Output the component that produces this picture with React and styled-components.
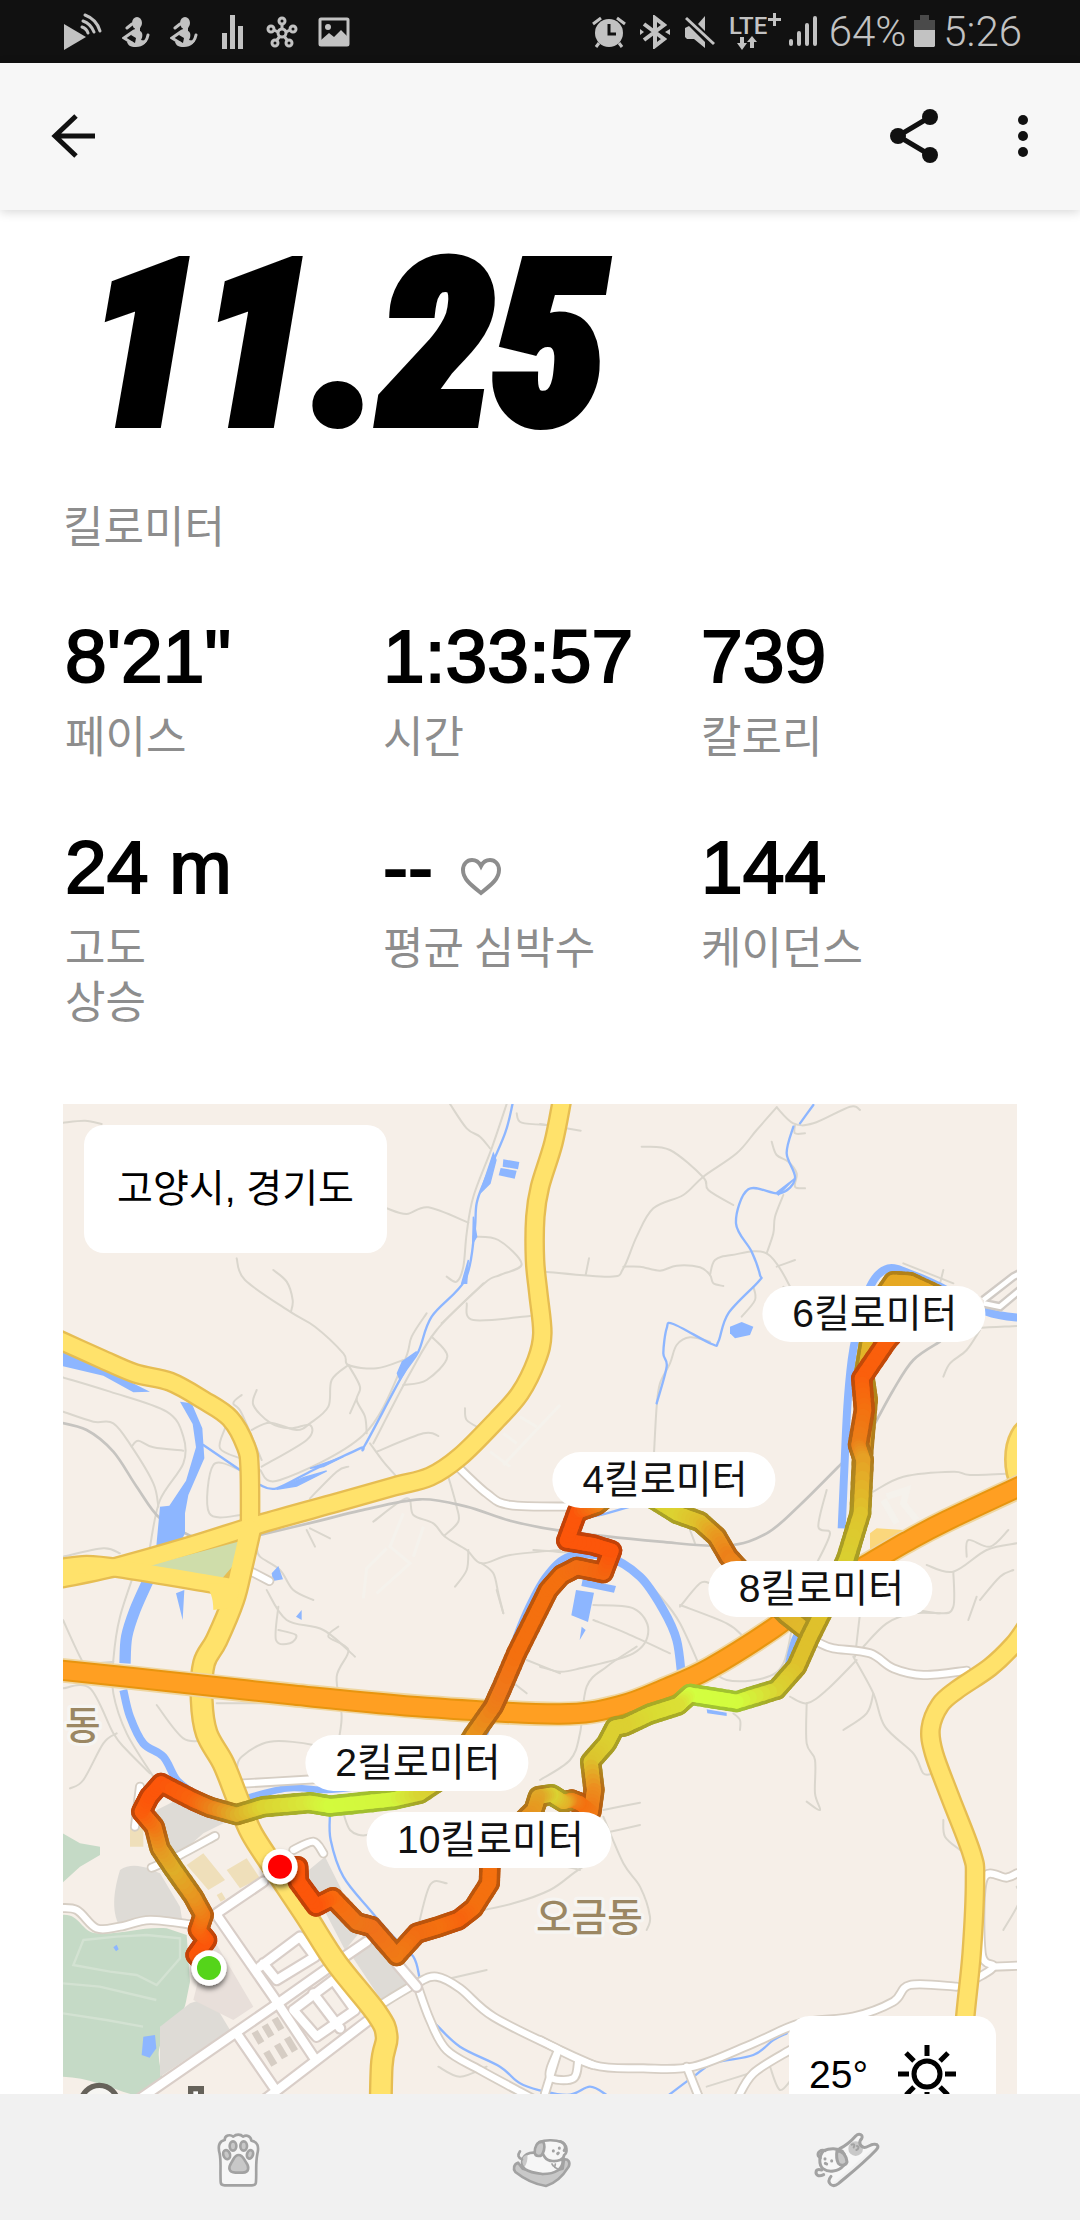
import React from 'react'
import styled, { createGlobalStyle } from 'styled-components'

const GlobalStyle = createGlobalStyle`
    * {
        box-sizing: border-box;
    }
    body {
        margin: 0;
        background: #fff;
        font-family: "Liberation Sans", "Noto Sans CJK KR", sans-serif;
    }
    button {
        border: 0;
        padding: 0;
        background: none;
        line-height: 0;
        cursor: pointer;
    }
`

const Screen = styled.div`
    display: flex;
    flex-direction: column;
    height: 100vh;
    overflow: hidden;
`

const StatusBar = styled.div`
    flex: none;
    display: flex;
    justify-content: space-between;
    align-items: center;
    height: 63px;
    padding: 0 58px 0 64px;
    background: #111;
    color: #c2c2c2;
`

const StatusGroup = styled.div`
    display: flex;
    align-items: center;
    gap: ${(props) => props.$gap}px;
`

const StatusText = styled.span`
    font-family: Roboto, sans-serif;
    font-size: 42px;
    font-weight: 300;
    line-height: 48px;
`

const AppBar = styled.header`
    position: relative;
    flex: none;
    display: flex;
    align-items: center;
    justify-content: space-between;
    height: 147px;
    padding: 0 45px 0 50px;
    background: #f7f7f7;
    box-shadow: 0 2px 10px rgba(0, 0, 0, 0.16);
`

const Actions = styled.div`
    display: flex;
    align-items: center;
    gap: 72px;
`

const Content = styled.main`
    flex: 1;
    min-height: 0;
    overflow: hidden;
    padding: 0 63px;
`

const Distance = styled.h1`
    margin: 0;
    padding: 12px 0 0 24px;
    color: #000;
    font-family: "Roboto Condensed", "Open Sans Condensed", "Noto Sans Condensed", "Open Sans", sans-serif;
    font-size: 228px;
    font-style: italic;
    font-weight: 900;
    line-height: 246px;
    -webkit-text-stroke: 10px #000;
`

const Label = styled.div`
    margin-top: 4px;
    color: #8d8d8d;
    font-family: "Noto Sans CJK KR", sans-serif;
    font-size: 44px;
    line-height: 54px;
`

const DistanceLabel = styled(Label)`
    margin-top: 29px;
`

const Stats = styled.section`
    display: grid;
    grid-template-columns: repeat(3, 1fr);
    row-gap: 59px;
    margin-top: 58px;
`

const Stat = styled.div`
    padding-left: 2px;
`

const Value = styled.div`
    display: flex;
    align-items: center;
    gap: 28px;
    height: 94px;
    color: #000;
    font-size: 75px;
    line-height: 94px;
    white-space: nowrap;
    -webkit-text-stroke: 2px #000;

    svg {
        margin-top: 20px;
    }
`

const MapBox = styled.section`
    position: relative;
    margin-top: 78px;
    background: #f6efe8;
`

const MapSvg = styled.svg`
    display: block;
    width: 100%;
    height: auto;
`

const Place = styled.div`
    position: absolute;
    top: 21px;
    left: 21px;
    padding: 0 33px;
    border-radius: 20px;
    background: #fff;
    color: #000;
    font-size: 39px;
    line-height: 128px;
`

const Weather = styled.div`
    position: absolute;
    right: 21px;
    bottom: 21px;
    display: flex;
    align-items: center;
    gap: 30px;
    height: 116px;
    padding: 0 40px 0 20px;
    border-radius: 20px;
    background: #fff;
    color: #000;
    font-size: 39px;
    line-height: 1;
`

const Pin = styled.div`
    position: absolute;
    left: ${(props) => props.$x}%;
    top: ${(props) => props.$y}%;
    transform: translate(-50%, -50%);
    padding: 0 28px 0 30px;
    border-radius: 28px;
    background: #fff;
    color: #111;
    font-size: 39px;
    line-height: 56px;
    white-space: nowrap;
`

const BottomNav = styled.nav`
    flex: none;
    display: flex;
    justify-content: space-around;
    align-items: center;
    height: 126px;
    padding: 0 80px 0 88px;
    background: #f1f1f1;
`

/* ---------- status icons ---------- */

const Runner = () => (
    <svg width="28" height="32" viewBox="0 0 28 32" fill="#c2c2c2" stroke="#c2c2c2">
        <ellipse cx="15" cy="7" rx="5" ry="6" stroke="none" />
        <path d="M12 10h6v5c3 1 3 6 1 9l5 1c2-2 1-4 2-6-0 8-5 12-12 12-6 0-8-2-9-5l4-1 4 2 1-5-5-3c1-3 2-5 4-6z" stroke="none" />
        <path d="M10 8L5 12M12 15L2 22l8 5M19 27c4 0 6-3 7-8" fill="none" strokeWidth="3" strokeLinecap="round" />
    </svg>
)

const LeftIcons = () => (
    <StatusGroup $gap={20}>
        <svg width="38" height="38" viewBox="0 0 38 38">
            <path d="M0 11l22 13L0 37z" fill="#c2c2c2" />
            <path d="M18 14c3 1 5 3 6 6M19 8c6 2 9 6 11 11M21 2c8 3 13 9 15 16" fill="none" stroke="#c2c2c2" strokeWidth="3" strokeLinecap="round" />
        </svg>
        <Runner />
        <Runner />
        <svg width="28" height="36" viewBox="0 0 28 36" fill="#c2c2c2">
            <path d="M4 19h5v16H4zM12 1h5v34h-5zM20 12h5v23h-5z" />
        </svg>
        <svg width="32" height="32" viewBox="0 0 32 32" fill="none" stroke="#c2c2c2" strokeWidth="3">
            <circle cx="16" cy="17" r="4" />
            <circle cx="16" cy="5" r="3" />
            <circle cx="5" cy="13" r="3" />
            <circle cx="27" cy="13" r="3" />
            <circle cx="9" cy="27" r="3" />
            <circle cx="23" cy="27" r="3" />
            <path d="M16 8v5M8 14l4 2M24 14l-4 2M11 24l3-4M21 24l-3-4" />
        </svg>
        <svg width="32" height="30" viewBox="0 0 32 30">
            <rect x="2" y="2" width="28" height="26" rx="1" fill="none" stroke="#c2c2c2" strokeWidth="3" />
            <circle cx="10" cy="10" r="3" fill="#c2c2c2" />
            <path d="M3 23l8-7 5 4 7-7 6 6v9H3z" fill="#c2c2c2" />
        </svg>
    </StatusGroup>
)

const RightIcons = () => (
    <StatusGroup $gap={12}>
        <StatusGroup $gap={14}>
            <svg width="34" height="32" viewBox="0 0 34 32">
                <circle cx="17" cy="17" r="14" fill="#c2c2c2" />
                <path d="M1 8l8-6M33 8l-8-6M7 27l-3 4M27 27l3 4" stroke="#c2c2c2" strokeWidth="3" />
                <path d="M17 8v10h7" fill="none" stroke="#111" strokeWidth="3" />
            </svg>
            <svg width="30" height="34" viewBox="0 0 30 34" fill="none" stroke="#c2c2c2" strokeWidth="4">
                <path d="M4 9l20 15-9 7V3l9 7L4 25" />
                <path d="M0 14l4 3-4 3zM30 14l-5 3 5 3z" fill="#c2c2c2" stroke="none" />
            </svg>
            <svg width="31" height="34" viewBox="0 0 31 34">
                <path d="M1 13l4-2 16 16v6l-11-9H3l-2-2zM14 9l7-8v15z" fill="#c2c2c2" />
                <path d="M2 3l28 26" stroke="#c2c2c2" strokeWidth="3" />
            </svg>
            <StatusGroup $gap={8}>
                <svg width="52" height="40" viewBox="0 0 52 40" fill="#c2c2c2">
                    <text x="0" y="22" fontFamily="Roboto, sans-serif" fontSize="24" fontWeight="500">LTE</text>
                    <path d="M44 1h3v5h5v3h-5v5h-3V9h-5V6h5z" />
                    <path d="M11 25h4v6h3l-5 7-5-7h3zM21 36h4v-6h3l-5-6-5 6h3z" />
                </svg>
                <svg width="28" height="32" viewBox="0 0 28 32" stroke="#c2c2c2" strokeWidth="4" strokeLinecap="round">
                    <path d="M2 25v3M10 17v11M18 9v19M26 2v26" />
                </svg>
            </StatusGroup>
        </StatusGroup>
        <StatusGroup $gap={8}>
            <StatusText>64%</StatusText>
            <svg width="21" height="33" viewBox="0 0 21 33">
                <path d="M6 0h9v5h6v10H0V5h6z" fill="#4a4a4a" />
                <path d="M0 15h21v16l-1 1H1l-1-1z" fill="#c2c2c2" />
            </svg>
            <StatusText>5:26</StatusText>
        </StatusGroup>
    </StatusGroup>
)

/* ---------- map ---------- */

const VIEW = { x: 9, y: 12, w: 2862, h: 3147 }

// Catmull-Rom through the points
const smooth = (pts) => {
    let d = `M${pts[0][0]} ${pts[0][1]}`
    for (let i = 0; i < pts.length - 1; i++) {
        const p0 = pts[i - 1] || pts[i]
        const p1 = pts[i]
        const p2 = pts[i + 1]
        const p3 = pts[i + 2] || p2
        const c1 = [p1[0] + (p2[0] - p0[0]) / 6, p1[1] + (p2[1] - p0[1]) / 6]
        const c2 = [p2[0] - (p3[0] - p1[0]) / 6, p2[1] - (p3[1] - p1[1]) / 6]
        d += `C${c1[0]} ${c1[1]} ${c2[0]} ${c2[1]} ${p2[0]} ${p2[1]}`
    }
    return d
}

const yellowRoads = [
    [[-20, 712], [120, 775], [225, 820], [330, 845], [430, 900], [510, 955], [558, 1040], [569, 1110], [570, 1300]],
    [[1506, 0], [1480, 130], [1440, 260], [1426, 350], [1425, 480], [1435, 580], [1447, 700], [1430, 780], [1380, 880], [1310, 960], [1200, 1070], [1110, 1130], [1000, 1160], [830, 1208], [600, 1272], [400, 1335], [170, 1400], [-20, 1440]],
    [[-20, 1408], [80, 1395], [200, 1408], [440, 1448], [520, 1462]],
    [[2900, 1580], [2860, 1635], [2790, 1702], [2690, 1770], [2640, 1815], [2612, 1885], [2622, 1960], [2670, 2090], [2735, 2260], [2745, 2340], [2735, 2560], [2715, 2760], [2710, 2900]],
]

const mainRoad = [[570, 1290], [545, 1400], [520, 1500], [470, 1620], [432, 1690], [425, 1800], [440, 1900], [490, 1990], [530, 2090], [575, 2200], [660, 2330], [740, 2450], [830, 2590], [950, 2740], [980, 2810], [965, 2900], [960, 3180]]

const highway = [[-20, 1708], [300, 1742], [700, 1785], [1100, 1822], [1500, 1842], [1680, 1817], [1820, 1764], [1950, 1704], [2140, 1585], [2280, 1480], [2420, 1395], [2540, 1325], [2660, 1262], [2900, 1150]]

const whiteRoads = [
    [[1190, 1097], [1280, 1180], [1350, 1215], [1540, 1220]],
    [[555, 1405], [628, 1443]],
    [[525, 2052], [760, 2038]],
    [[2280, 1630], [2320, 1645], [2430, 1660], [2500, 1705], [2590, 1725], [2720, 1712]],
    [[2870, 2320], [2840, 2333], [2770, 2338], [2765, 2560], [2800, 2600], [2740, 2640]],
    [[2800, 2600], [2880, 2597]],
    [[2690, 2660], [2550, 2655], [2500, 2705], [2380, 2750], [2220, 2770], [2080, 2830], [1900, 2900], [1750, 2905], [1600, 2895], [1440, 2820]],
    [[-10, 2425], [50, 2430], [110, 2485], [180, 2480], [270, 2460], [400, 2475]],
    [[275, 2303], [350, 2270], [465, 2208]],
    [[240, 2060], [225, 2180]],
    [[700, 2250], [760, 2225], [790, 2260]],
    [[960, 2715], [1070, 2650], [1130, 2630], [1200, 2665], [1300, 2750], [1500, 2850], [1600, 2895]],
    [[1070, 2650], [1110, 2760], [1160, 2850], [1260, 2910], [1380, 2975], [1500, 3040]],
    [[1495, 2850], [1455, 2980]],
    [[1880, 2900], [1920, 3000]],
    [[2190, 2850], [2080, 2920], [2030, 3000]],
    [[1490, 2860], [1470, 2930], [1540, 2935], [1555, 2880]],
]

const streets = [
    [[470, 2445], [640, 2690], [760, 2870]],
    [[220, 3010], [640, 2720], [810, 2600], [920, 2525]],
    [[470, 2440], [610, 2345]],
    [[600, 2600], [720, 2510], [765, 2570], [650, 2640], [610, 2590]],
    [[700, 2730], [820, 2640], [885, 2730], [770, 2810], [700, 2730]],
    [[760, 2680], [840, 2785]],
    [[530, 2800], [640, 2960]],
    [[600, 3010], [920, 2765]],
    [[1010, 2590], [1070, 2660]],
]

const greyRoads = [
    [[9, 68], [75, 62], [125, 72]],
    [[1170, 12], [1220, 85], [1260, 110], [1290, 145]],
    [[1340, 12], [1295, 145], [1240, 290], [1220, 400], [1210, 500], [1190, 545], [1160, 530]],
    [[1370, 40], [1385, 68], [1470, 75]],
    [[980, 325], [1040, 342], [1105, 322], [1225, 368]],
    [[1240, 410], [1315, 420], [1385, 492], [1320, 525], [1275, 548], [1145, 670]],
    [[1220, 610], [1240, 660], [1410, 648]],
    [[1115, 710], [1162, 770], [1100, 840], [1030, 855]],
    [[1100, 640], [1055, 710], [1030, 790], [910, 1005], [660, 1140], [600, 1110]],
    [[1270, 550], [1130, 690], [1050, 820], [940, 1030]],
    [[530, 475], [555, 540], [690, 635], [765, 680], [850, 760], [865, 795], [950, 805], [1030, 780]],
    [[640, 510], [680, 545], [698, 600], [693, 635]],
    [[865, 795], [815, 840], [805, 920], [750, 970], [710, 990], [630, 968], [575, 990]],
    [[590, 870], [580, 915], [630, 968], [690, 985], [750, 975], [740, 1020], [605, 1100]],
    [[865, 795], [900, 860], [890, 900], [915, 950], [920, 1000]],
    [[890, 895], [870, 940]],
    [[9, 832], [150, 875], [320, 935], [370, 1010], [370, 1090], [300, 1200], [270, 1340]],
    [[9, 935], [100, 965], [160, 970], [215, 1040], [280, 1150], [295, 1220]],
    [[215, 1040], [235, 1022], [280, 1042], [370, 1052]],
    [[545, 885], [520, 910], [545, 940], [605, 1080]],
    [[495, 985], [480, 1045], [540, 1075]],
    [[540, 1110], [460, 1095], [448, 1240], [545, 1245]],
    [[1215, 925], [1220, 960], [1260, 985]],
    [[950, 1055], [1090, 1000], [1135, 1008]],
    [[930, 1030], [970, 1085], [1010, 1130]],
    [[750, 1195], [830, 1115], [865, 1100]],
    [[1165, 1130], [1190, 1220], [1195, 1265], [1155, 1305]],
    [[940, 1265], [1040, 1195], [1060, 1245], [1120, 1270], [1155, 1310], [1220, 1350], [1265, 1390], [1350, 1365], [1500, 1350]],
    [[1265, 1390], [1300, 1420], [1315, 1480], [1330, 1540]],
    [[1225, 1350], [1220, 1410], [1185, 1460]],
    [[740, 1290], [765, 1340]],
    [[750, 1285], [810, 1315]],
    [[590, 1340], [600, 1370], [660, 1410], [700, 1470], [760, 1500]],
    [[620, 1470], [680, 1560], [790, 1590], [885, 1670]],
    [[655, 1520], [648, 1620], [690, 1630], [708, 1605], [655, 1590]],
    [[835, 1580], [805, 1610], [865, 1650], [830, 1730], [845, 1850], [830, 1950]],
    [[9, 1370], [130, 1345], [180, 1360]],
    [[240, 1370], [180, 1550], [160, 1680], [160, 1780], [200, 1900], [280, 2030]],
    [[9, 1560], [60, 1670], [80, 1690], [160, 1685]],
    [[9, 1765], [90, 1765], [160, 1900], [200, 1950], [270, 2020]],
    [[30, 2065], [70, 2040], [130, 1930], [170, 1900]],
    [[290, 1815], [370, 1915], [440, 1920]],
    [[470, 1810], [840, 1810]],
    [[530, 2010], [545, 1970], [630, 1925], [760, 1935], [800, 1960]],
    [[1310, 1470], [1330, 1540]],
    [[1400, 1680], [1500, 1720]],
    [[1350, 1740], [1400, 1780]],
    [[845, 2120], [870, 2190], [920, 2205], [950, 2170], [1000, 2150]],
    [[1070, 2500], [1110, 2355], [1160, 2350]],
    [[1220, 2440], [1360, 2410], [1470, 2370], [1540, 2320], [1570, 2300]],
    [[820, 2390], [900, 2440], [1010, 2530], [1050, 2560]],
    [[1150, 2640], [1280, 2610]],
    [[1135, 2900], [1200, 2930], [1280, 2900]],
    [[2150, 22], [2090, 90], [2030, 160], [1930, 230], [1870, 285], [1780, 325], [1730, 410], [1690, 505], [1650, 530], [1455, 515]],
    [[1745, 140], [1830, 150], [1930, 232], [1945, 270], [2020, 315]],
    [[2150, 22], [2200, 70], [2260, 70], [2370, 20], [2400, 30]],
    [[1440, 72], [1562, 92]],
    [[1587, 475], [1577, 525]],
    [[1690, 500], [1740, 500], [1800, 512], [1850, 497], [1920, 502], [1950, 525], [1960, 550], [1990, 558]],
    [[1950, 525], [1965, 480], [2015, 465], [2120, 460], [2190, 560], [2170, 560]],
    [[2120, 460], [2140, 400], [2145, 350], [2170, 285]],
    [[2150, 500], [2205, 480]],
    [[2205, 75], [2205, 100], [2235, 100]],
    [[2135, 125], [2150, 165], [2185, 185], [2210, 220], [2205, 260], [2235, 265]],
    [[2080, 560], [2085, 600], [2045, 650]],
    [[1950, 725], [1890, 712], [1850, 735], [1830, 790], [1800, 850], [1790, 920], [1782, 1060]],
    [[2640, 720], [2700, 690], [2870, 678]],
    [[2760, 690], [2720, 750], [2670, 790], [2650, 830]],
    [[2530, 490], [2680, 550]],
    [[2650, 510], [2640, 550]],
    [[2440, 1175], [2530, 1130], [2680, 1115], [2730, 1125], [2870, 1120]],
    [[2300, 1170], [2275, 1280], [2310, 1300], [2270, 1390]],
    [[1600, 1560], [1700, 1600], [1830, 1660]],
    [[1890, 1290], [1905, 1330]],
    [[2600, 1395], [2680, 1415], [2780, 1350], [2870, 1330]],
    [[2720, 1370], [2725, 1320], [2790, 1340], [2845, 1290]],
    [[2680, 1415], [2680, 1520], [2640, 1540], [2520, 1520]],
    [[2760, 1500], [2820, 1430], [2860, 1410]],
    [[2725, 1560], [2750, 1490]],
    [[1420, 1350], [1490, 1355], [1600, 1365], [1720, 1410], [1810, 1500], [1860, 1570], [1920, 1700]],
    [[1860, 1520], [1920, 1450], [1950, 1450]],
    [[1600, 1515], [1720, 1525], [1765, 1590], [1720, 1660], [1560, 1705], [1500, 1715], [1440, 1700]],
    [[1730, 1640], [1640, 1700], [1580, 1760], [1560, 1900], [1530, 1980], [1440, 2040]],
    [[1860, 1515], [2000, 1570], [2050, 1610]],
    [[1930, 1690], [2000, 1740], [2110, 1735], [2170, 1690], [2200, 1560]],
    [[2390, 1680], [2300, 1770], [2240, 1810], [2190, 1790]],
    [[2240, 1810], [2240, 1930], [2265, 1980], [2265, 2080], [2280, 2130], [2240, 2105]],
    [[2380, 1670], [2440, 1780], [2475, 1880], [2560, 1960], [2590, 2020], [2620, 2020]],
    [[2440, 1780], [2420, 1840], [2350, 1890]],
    [[2410, 1640], [2480, 1570], [2560, 1540], [2640, 1540]],
    [[2385, 1670], [2400, 1540]],
    [[2020, 1840], [2040, 1860], [2040, 1890]],
    [[1630, 2130], [1740, 2108]],
    [[1630, 2200], [1740, 2175]],
    [[1630, 2150], [1690, 2290], [1740, 2360], [1770, 2450], [1760, 2490]],
    [[1520, 2300], [1560, 2310]],
    [[2650, 2160], [2655, 2210], [2700, 2250]],
    [[2870, 2360], [2880, 2400], [2830, 2490]],
    [[1940, 2960], [2100, 2910]],
    [[2130, 2900], [2160, 2970], [2200, 2930]],
]

const rails = [
    [[-10, 965], [80, 990], [160, 1055], [230, 1160], [300, 1255], [400, 1312]],
    [[600, 1305], [780, 1262], [900, 1232], [1080, 1198], [1220, 1220], [1350, 1262], [1500, 1292], [1800, 1325], [2000, 1337], [2120, 1300], [2220, 1215], [2360, 1075]],
    [[2440, 980], [2500, 870], [2560, 780], [2640, 725]],
]

const streams = [
    [[1358, 10], [1335, 100], [1275, 240], [1250, 310], [1243, 400], [1215, 540], [1115, 650], [1075, 755], [1025, 830], [915, 1035], [900, 1045], [760, 1110], [650, 1165], [600, 1155]],
    [[2200, 80], [2180, 160], [2205, 235], [2160, 280], [2065, 268], [2028, 370], [2075, 455], [2100, 525], [2095, 545], [2005, 640], [1975, 725], [1955, 732], [1840, 672], [1820, 685], [1810, 760], [1820, 800], [1790, 910]],
    [[2260, 15], [2220, 70]],
    [[430, 1035], [540, 1110]],
    [[810, 2140], [812, 2220], [850, 2330], [930, 2430], [1000, 2510], [1060, 2570], [1078, 2630]],
    [[1125, 2770], [1200, 2840], [1320, 2900], [1390, 2955], [1520, 2985], [1590, 2960], [1640, 2985]],
    [[1820, 2990], [1900, 2930], [1960, 2890], [2080, 2865], [2140, 2820], [2180, 2800]],
    [[1560, 1258], [1640, 1240], [1710, 1220]],
]

const rivers = [
    { w: 24, pts: [[2345, 1285], [2352, 1130], [2362, 920], [2375, 780], [2390, 700], [2430, 560], [2485, 505], [2560, 525], [2640, 560], [2780, 635], [2890, 655]] },
    { w: 34, pts: [[265, 1440], [225, 1530], [200, 1610], [195, 1690]] },
    { w: 26, pts: [[1240, 1990], [1290, 1850], [1350, 1670], [1400, 1540], [1460, 1430], [1530, 1370], [1640, 1370], [1740, 1430], [1810, 1530], [1850, 1620], [1865, 1730]] },
    { w: 24, pts: [[190, 1770], [210, 1850], [250, 1930], [310, 1970], [350, 2040], [400, 2080]] },
    { w: 20, pts: [[540, 2100], [680, 2065], [800, 2070], [900, 2060]] },
    { w: 24, pts: [[2260, 1560], [2210, 1610], [2185, 1700]] },
]

const START = '#fc560a'

// x, y, colour at that point of the run
const outbound = [
    [445, 2605, START], [408, 2565, START], [440, 2520, START], [415, 2490, '#f8640e'], [430, 2445, '#f07a15'], [400, 2390, '#e89420'], [340, 2305, '#dfae28'], [300, 2245, '#e59a22'], [283, 2180, '#f07a15'], [245, 2135, '#fa5f0c'], [268, 2090, START], [303, 2050, START], [400, 2100, '#f8640e'], [450, 2122, '#ec8019'], [530, 2144, '#dfb02a'], [610, 2120, '#dcd431'], [750, 2108, '#d8ea3a'], [810, 2118, '#d3fb3d'], [1000, 2098, '#d3f53c'], [1080, 2080, '#d8d533'], [1170, 2020, '#dfc02c'], [1240, 1905, '#e8961e'], [1300, 1820, '#ee7f18'], [1325, 1765, '#f0781a'], [1370, 1660, '#f4700f'], [1430, 1540, '#f4700f'], [1465, 1470, '#f4700f'], [1505, 1425, '#f4700f'], [1550, 1402, '#f26d12'], [1630, 1418, '#f4660f'], [1655, 1352, START], [1600, 1335, START], [1520, 1322, START], [1552, 1235, START], [1610, 1215, '#f07a15'], [1640, 1190, '#dfa82a'], [1700, 1150, '#dcc42d'], [1770, 1190, '#d9d22f'], [1850, 1240, '#dcd231'], [1920, 1265, '#dfbe2b'], [1970, 1310, '#e89a20'], [2005, 1370, '#ed8019'], [2060, 1430, '#ea9020'], [2180, 1545, '#e0b42a'], [2250, 1600, '#e0bc2c'], [2300, 1500, '#e0c02c'], [2362, 1375, '#d9cf30'], [2400, 1240, '#dfc02c'], [2408, 1060, '#e6a125'], [2422, 900, '#e6a822'], [2412, 830, '#e2b428'], [2430, 720, '#e2b428'], [2455, 610, '#e6a822'], [2500, 545, '#e6a822'], [2550, 548, '#e6a822'], [2640, 590, '#e6a822'],
]

const inbound = [
    [2560, 630, START], [2480, 725, '#fa5f0c'], [2405, 835, '#fa5f0c'], [2413, 930, '#f4700f'], [2395, 1035, '#ec8019'], [2410, 1080, '#e6a125'], [2402, 1240, '#dfc42d'], [2360, 1375, '#dacf30'], [2300, 1510, '#dfc42c'], [2250, 1610, '#dfc02c'], [2210, 1700, '#dfc22c'], [2150, 1768, '#dad232'], [2030, 1805, '#d3fb3d'], [1890, 1783, '#d3ff40'], [1855, 1815, '#dbe035'], [1770, 1842, '#dadc32'], [1695, 1877, '#dcd031'], [1665, 1882, '#dcd031'], [1640, 1930, '#dcd031'], [1592, 1985, '#dcc42d'], [1602, 2070, '#ec9020'], [1593, 2135, '#f07a15'], [1560, 2110, '#f4700f'], [1535, 2100, '#ee8019'], [1510, 2106, '#e4b028'], [1475, 2084, '#dad232'], [1435, 2090, '#e0a828'], [1422, 2130, '#e69a20'], [1370, 2180, '#e58a20'], [1290, 2290, '#f4700f'], [1288, 2350, '#f4700f'], [1240, 2425, '#f4700f'], [1195, 2460, '#f8640e'], [1130, 2482, '#f4700f'], [1070, 2500, '#f26d12'], [1010, 2567, '#f07a15'], [935, 2480, '#f0701a'], [890, 2468, '#ee7518'], [818, 2393, '#f96a0e'], [768, 2418, START], [715, 2345, START], [713, 2300, START], [660, 2300, START],
]

const toRgb = (hex) => [1, 3, 5].map((i) => parseInt(hex.slice(i, i + 2), 16))
const mix = (a, b, t, shade) =>
    `rgb(${toRgb(a).map((v, i) => Math.round((v + (toRgb(b)[i] - v) * t) * shade)).join(',')})`

const STEPS = 6

const pieces = (pts) =>
    pts.slice(1).flatMap((b, i) => {
        const a = pts[i]
        return Array.from({ length: STEPS }, (_, n) => {
            const t1 = n / STEPS
            const t2 = (n + 1) / STEPS
            return {
                x1: a[0] + (b[0] - a[0]) * t1,
                y1: a[1] + (b[1] - a[1]) * t1,
                x2: a[0] + (b[0] - a[0]) * t2,
                y2: a[1] + (b[1] - a[1]) * t2,
                edge: mix(a[2], b[2], t1, 0.77),
                fill: mix(a[2], b[2], t1, 1),
            }
        })
    })

const Route = ({ pts }) => (
    <g strokeLinecap="round">
        {pieces(pts).map((p, i) => (
            <line key={'e' + i} x1={p.x1} y1={p.y1} x2={p.x2} y2={p.y2} stroke={p.edge} strokeWidth="64" />
        ))}
        {pieces(pts).map((p, i) => (
            <line key={'f' + i} x1={p.x1} y1={p.y1} x2={p.x2} y2={p.y2} stroke={p.fill} strokeWidth="42" />
        ))}
    </g>
)

const Lines = ({ list, color, width, curved }) => (
    <g fill="none" stroke={color} strokeWidth={width} strokeLinejoin="round" strokeLinecap="round">
        {list.map((pts, i) => (
            <path key={i} d={curved ? smooth(pts) : 'M' + pts.map((p) => p.join(' ')).join('L')} />
        ))}
    </g>
)

const RouteMap = () => (
    <MapSvg viewBox={`${VIEW.x} ${VIEW.y} ${VIEW.w} ${VIEW.h}`} role="img" aria-label="고양시, 경기도">
        <defs>
            <filter id="drop" x="-50%" y="-50%" width="200%" height="200%">
                <feDropShadow dx="0" dy="10" stdDeviation="8" floodOpacity="0.55" />
            </filter>
        </defs>
        <rect x="0" y="0" width="2900" height="3200" fill="#f6efe8" />

        <g fill="#c5dac6">
            <path d="M0 2195l60 35 60 10v25l-60 35-60 55z" />
            <path d="M0 2445c60-10 60 50 110 55 80 5 130-20 210-15l60 20 10 140-10 50c-10 60-40 80-60 110-40 40-20 90-10 140l-70 45c-80-20-150-60-240-60z" />
        </g>
        <path d="M70 2520l100-10 90-5 100 10v60l-70 80-60-30-80-10-110-20zM9 2650l110 10 170 40M9 2740l130 20 110 20" fill="none" stroke="#d3e2d2" strokeWidth="7" />
        <g fill="#dedbd6">
            <path d="M290 2130l60-30 180 50-100 50-80 70-70-110z" />
            <path d="M180 2310c40-30 100 0 120 10l60 100 10 60-100-20-90 20c-30-50-15-120 0-170z" />
            <path d="M300 2780l90-70 60-20 60 100-210 140z" />
            <path d="M735 2320l60-50 110 220-50 60zM870 2560l80-60 110 150-90 60z" />
            <path d="M450 2500l130 220-60 40-120-60z" fill="#e8dfda" />
        </g>
        <g fill="#efdfba">
            <path d="M380 2295l50-35 65 80-50 30zM500 2310l60-35 40 60-60 30zM210 2180h40v60h-40zM470 2385l15-8 12 20-15 8z" />
        </g>
        <g fill="none" stroke="#f5f2ec" strokeWidth="9">
            <path d="M1030 1240l-40 100 60 50-100 90M1090 1280l-30 90M980 1345l-60 60-10 90M1500 915L1330 1095M1290 1055l60 45M1380 950l50 30M1330 1000l40 30" />
            <path d="M2480 1190l60-20-10 40 40 50M2470 1200l40 70" strokeWidth="20" />
        </g>

        <Lines list={greyRoads} color="#dad6cd" width={6} curved />
        <Lines list={rails} color="#c6c4c0" width={8} curved />
        <Lines list={streams} color="#8db6ff" width={7} curved />
        <path d="M1300 160l8 20-18 70-30 30 20-60zM1240 350l10 60-12 20zM1225 480l-5 70-15 0zM1070 755l-50 85-8-20 15-35zM650 1168l80-35 70-20-90 45zM750 1105l100-35-60 30zM2205 235l-50 50-5-8z" fill="#8db6ff" stroke="#8db6ff" strokeWidth="4" />
        {rivers.map((r, i) => (
            <path key={i} d={smooth(r.pts)} fill="none" stroke="#8db6ff" strokeWidth={r.w} />
        ))}
        <g fill="#8db6ff">
            <path d="M0 750l120 50 150 75-50 2-90-50-130-30z" />
            <path d="M360 905l35 5 32 75 6 90-48 110-10 55v60l-30 60-60 20 15-160 28-3 50-75 30-100-10-70z" />
            <path d="M1330 178l48 8-4 22-46-8zM1322 204l48 8-6 24-48-10z" />
            <path d="M2010 680l35-14 35 14-10 25-45 10-15-15z" />
            <path d="M635 1420l20-22 14 40-30 5zM348 1480l25-10-5 90zM708 1550l17-20v30z" />
            <path d="M1568 1438l100 20-6 20-98-20zM1548 1470l54 8-18 88-50-20zM1565 1580l12 10-18 30z" />
            <path d="M250 2810l35-5 4 40-20 28-24-8zM160 2542l10-8 6 14-8 6zM1940 1828l60 10v10l-58-8z" />
        </g>

        <Lines list={whiteRoads} color="#d6cec4" width={30} curved />
        <Lines list={whiteRoads} color="#ffffff" width={19} curved />
        <Lines list={streets} color="#d9cec8" width={38} />
        <Lines list={streets} color="#ffffff" width={25} />
        <g fill="#d6cdc4">
            <path d="M575 2800l18-10 20 34-18 10zM605 2780l18-10 20 34-18 10zM635 2760l18-10 20 34-18 10zM610 2860l18-10 24 40-18 10zM642 2838l18-10 24 40-18 10zM672 2818l18-10 24 40-18 10z" />
        </g>

        <ellipse cx="2900" cy="1078" rx="64" ry="118" fill="#ffe26b" stroke="#eac258" strokeWidth="8" />
        <path d="M2430 1300l20-15 80 5 10 30-90 60-20-20z" fill="#fbd77c" />
        <Lines list={[...yellowRoads, mainRoad]} color="#e6bd52" width={62} curved />
        <Lines list={[mainRoad]} color="#e6bd52" width={72} curved />
        <path d="M230 1400l320-85-25 85-35 40-150-15z" fill="#cfddaa" stroke="#e6bd52" strokeWidth="12" />
        <Lines list={yellowRoads} color="#ffe26b" width={48} curved />
        <Lines list={[mainRoad]} color="#ffe26b" width={58} curved />
        <path d="M430 1450l110 0-10 70-70 10c0-40-10-60-30-80z" fill="#ffe26b" />

        <Lines list={[highway]} color="#efd6a0" width={74} curved />
        <Lines list={[highway]} color="#e8950f" width={64} curved />
        <Lines list={[highway]} color="#ff9f22" width={52} curved />

        <g fill="#9b8763" stroke="#f6f5f2" strokeWidth="20" strokeLinejoin="round" fontFamily="Noto Sans CJK KR, sans-serif" fontSize="116" fontWeight="500" paintOrder="stroke">
            <text x="15" y="1918">동</text>
            <text x="1428" y="2492">오금동</text>
        </g>

        <path d="M2770 600l90-70 60-30M2770 610l50 10 60-50" fill="none" stroke="#d0cac4" strokeWidth="28" />
        <path d="M2770 600l90-70 60-30M2770 610l50 10 60-50" fill="none" stroke="#fff" strokeWidth="14" />

        <Route pts={outbound} />
        <Route pts={inbound} />

        <g filter="url(#drop)">
            <circle cx="660" cy="2300" r="53" fill="#fff" />
            <circle cx="447" cy="2604" r="53" fill="#fff" />
        </g>
        <circle cx="660" cy="2300" r="36" fill="#f00" />
        <circle cx="447" cy="2604" r="36" fill="#55d41a" />

        <circle cx="118" cy="3012" r="56" fill="#f6f5f2" stroke="#66625a" strokeWidth="16" />
        <ellipse cx="118" cy="2996" rx="16" ry="12" fill="#a9a59d" />
        <path d="M384 2958h48v60h-48z" fill="#66625a" />
        <path d="M400 2974h14v20h-14z" fill="#fff" />
    </MapSvg>
)

const pins = [
    { text: '6킬로미터', x: 85, y: 20 },
    { text: '4킬로미터', x: 63, y: 35.8 },
    { text: '8킬로미터', x: 79.4, y: 46.2 },
    { text: '2킬로미터', x: 37.1, y: 62.8 },
    { text: '10킬로미터', x: 44.7, y: 70.2 },
]

/* ---------- page ---------- */

const stats = [
    { value: `8'21"`, label: '페이스' },
    { value: '1:33:57', label: '시간' },
    { value: '739', label: '칼로리' },
    { value: '24 m', label: <>고도<br />상승</> },
    { value: '--', label: '평균 심박수', heart: true },
    { value: '144', label: '케이던스' },
]

const Heart = () => (
    <svg width="40" height="38" viewBox="0 0 40 38" fill="none" stroke="#8d8d8d" strokeWidth="4">
        <path d="M20 35C10 27 2 21 2 12 2 6 6 2 11 2c4 0 7 2 9 6 2-4 5-6 9-6 5 0 9 4 9 10 0 9-8 15-18 23z" />
    </svg>
)

const Sun = () => (
    <svg width="58" height="58" viewBox="0 0 58 58" fill="none" stroke="#000" strokeWidth="5">
        <circle cx="29" cy="29" r="13" />
        <path d="M29 0v11M29 47v11M0 29h11M47 29h11M8 8l8 8M42 42l8 8M50 8l-8 8M16 42l-8 8" />
    </svg>
)

const Paw = () => (
    <svg width="70" height="70" viewBox="0 0 210 210" stroke="#a2a2a2" strokeWidth="8" fill="#c8c8c8" strokeLinejoin="round">
        <path d="M50 180c-2-40 2-60-3-85-6-22-2-38 15-41 0-14 16-18 26-10 8-8 22-8 29 0 12-7 24 0 25 12 18 3 24 16 18 40-6 30-2 55-4 82 0 10-4 12-12 12H62c-8 0-12-2-12-10z" fill="#f6f6f6" />
        <ellipse cx="87" cy="72" rx="10" ry="14" />
        <ellipse cx="119" cy="72" rx="10" ry="14" />
        <ellipse cx="68" cy="98" rx="10" ry="14" transform="rotate(-18 68 98)" />
        <ellipse cx="138" cy="97" rx="9" ry="13" transform="rotate(18 138 97)" />
        <path d="M104 99c12 0 14 10 22 22 10 14 10 30-10 31H94c-20-1-22-15-12-30 8-12 10-23 22-23z" />
    </svg>
)

const SleepingDog = () => (
    <svg width="70" height="70" viewBox="0 0 210 210" stroke="#a2a2a2" strokeWidth="8" fill="none" strokeLinecap="round" strokeLinejoin="round">
        <path d="M36 122c-12 4-16 18-8 28 30 24 65 38 92 42 28-8 52-32 68-58 6-14-2-24-14-22l-4 28-60 16-60-16z" fill="#c8c8c8" />
        <path d="M50 110c-8 30 10 40 60 46 40 0 62-16 60-42l-20-8-60-14c-20-2-34 6-40 18z" fill="#f6f6f6" />
        <path d="M50 108c6-8 12-10 14-8 2 12-2 26-8 34-8-8-8-16-6-26z" fill="#c8c8c8" stroke="none" />
        <path d="M48 112c-12-6-14-12-6-24" />
        <path d="M100 60c20-8 50-6 66 0 18 8 20 30 8 40 0 14-20 18-34 17-20 0-30-12-40-57z" fill="#f6f6f6" />
        <path d="M112 60c-20-4-26 16-26 32 2 12 20 14 24 2 6-12 8-22 2-34z" fill="#c8c8c8" />
        <path d="M162 58c14 4 20 18 12 28" />
        <path d="M138 126l4 6M148 126l-2 10 8 4" strokeWidth="5" />
        <path d="M142 86v1M160 78v1M157 93l-2 2" strokeWidth="9" />
    </svg>
)

const JumpingDog = () => (
    <svg width="75" height="75" viewBox="0 0 225 225" stroke="#a2a2a2" strokeWidth="9" fill="none" strokeLinecap="round" strokeLinejoin="round">
        <path d="M62 172c-16 8-10 26 4 22L130 140l66-58c14-10 8-16-6-12-16 12-30 14-36 2l2-20c4-10-8-12-14-4-14 14-34 30-54 40l-40 60z" fill="#f6f6f6" stroke="none" />
        <ellipse cx="140" cy="86" rx="22" ry="22" fill="#c8c8c8" stroke="none" />
        <path d="M92 86c20-10 34-22 48-38 10-10 24-4 18 8-10 10-6 22 6 26 10 2 18-8 30-9 14-2 16 8 8 16-40 42-76 70-114 102-18 14-38-2-22-22" />
        <path d="M44 164c-16 8-26 0-22-12 4-6 10-4 16-2" />
        <path d="M44 92c18-8 42-8 56 2 10 10 12 32 4 42-16 20-46 22-62 10-14-12-12-40 2-54z" fill="#f6f6f6" />
        <path d="M84 92c16 0 28 14 30 34-4 12-20 12-26 4-6-12-6-26-4-38z" fill="#c8c8c8" />
        <path d="M48 92c-12-4-24 4-20 16l6 6" />
        <path d="M128 74c8-4 10 2 6 8M144 78c8 2 4 10-2 12" strokeWidth="6" />
        <path d="M48 116v1M68 122v1M49 130l4 2" strokeWidth="9" />
    </svg>
)

function App() {
    return (
        <Screen>
            <GlobalStyle />
            <StatusBar>
                <LeftIcons />
                <RightIcons />
            </StatusBar>

            <AppBar>
                <button aria-label="뒤로">
                    <svg width="48" height="48" viewBox="0 0 48 48" fill="none" stroke="#111" strokeWidth="5">
                        <path d="M26 3L5 23l21 20M6 23h39" />
                    </svg>
                </button>
                <Actions>
                    <button aria-label="공유">
                        <svg width="50" height="56" viewBox="0 0 50 56" fill="#111">
                            <path d="M41 8L9 27l32 19" fill="none" stroke="#111" strokeWidth="5" />
                            <circle cx="41" cy="8" r="8" />
                            <circle cx="9" cy="27" r="8" />
                            <circle cx="41" cy="46" r="8" />
                        </svg>
                    </button>
                    <button aria-label="더보기">
                        <svg width="24" height="48" viewBox="0 0 24 48" fill="#111">
                            <circle cx="12" cy="7" r="5" />
                            <circle cx="12" cy="23" r="5" />
                            <circle cx="12" cy="39" r="5" />
                        </svg>
                    </button>
                </Actions>
            </AppBar>

            <Content>
                <Distance>11.25</Distance>
                <DistanceLabel>킬로미터</DistanceLabel>

                <Stats>
                    {stats.map((s) => (
                        <Stat key={s.value}>
                            <Value>{s.value}{s.heart && <Heart />}</Value>
                            <Label>{s.label}</Label>
                        </Stat>
                    ))}
                </Stats>

                <MapBox>
                    <RouteMap />
                    {pins.map((p) => (
                        <Pin key={p.text} $x={p.x} $y={p.y}>{p.text}</Pin>
                    ))}
                    <Place>고양시, 경기도</Place>
                    <Weather>
                        25°
                        <Sun />
                    </Weather>
                </MapBox>
            </Content>

            <BottomNav>
                <button aria-label="최근 앱"><Paw /></button>
                <button aria-label="홈"><SleepingDog /></button>
                <button aria-label="이전"><JumpingDog /></button>
            </BottomNav>
        </Screen>
    )
}

export default App
